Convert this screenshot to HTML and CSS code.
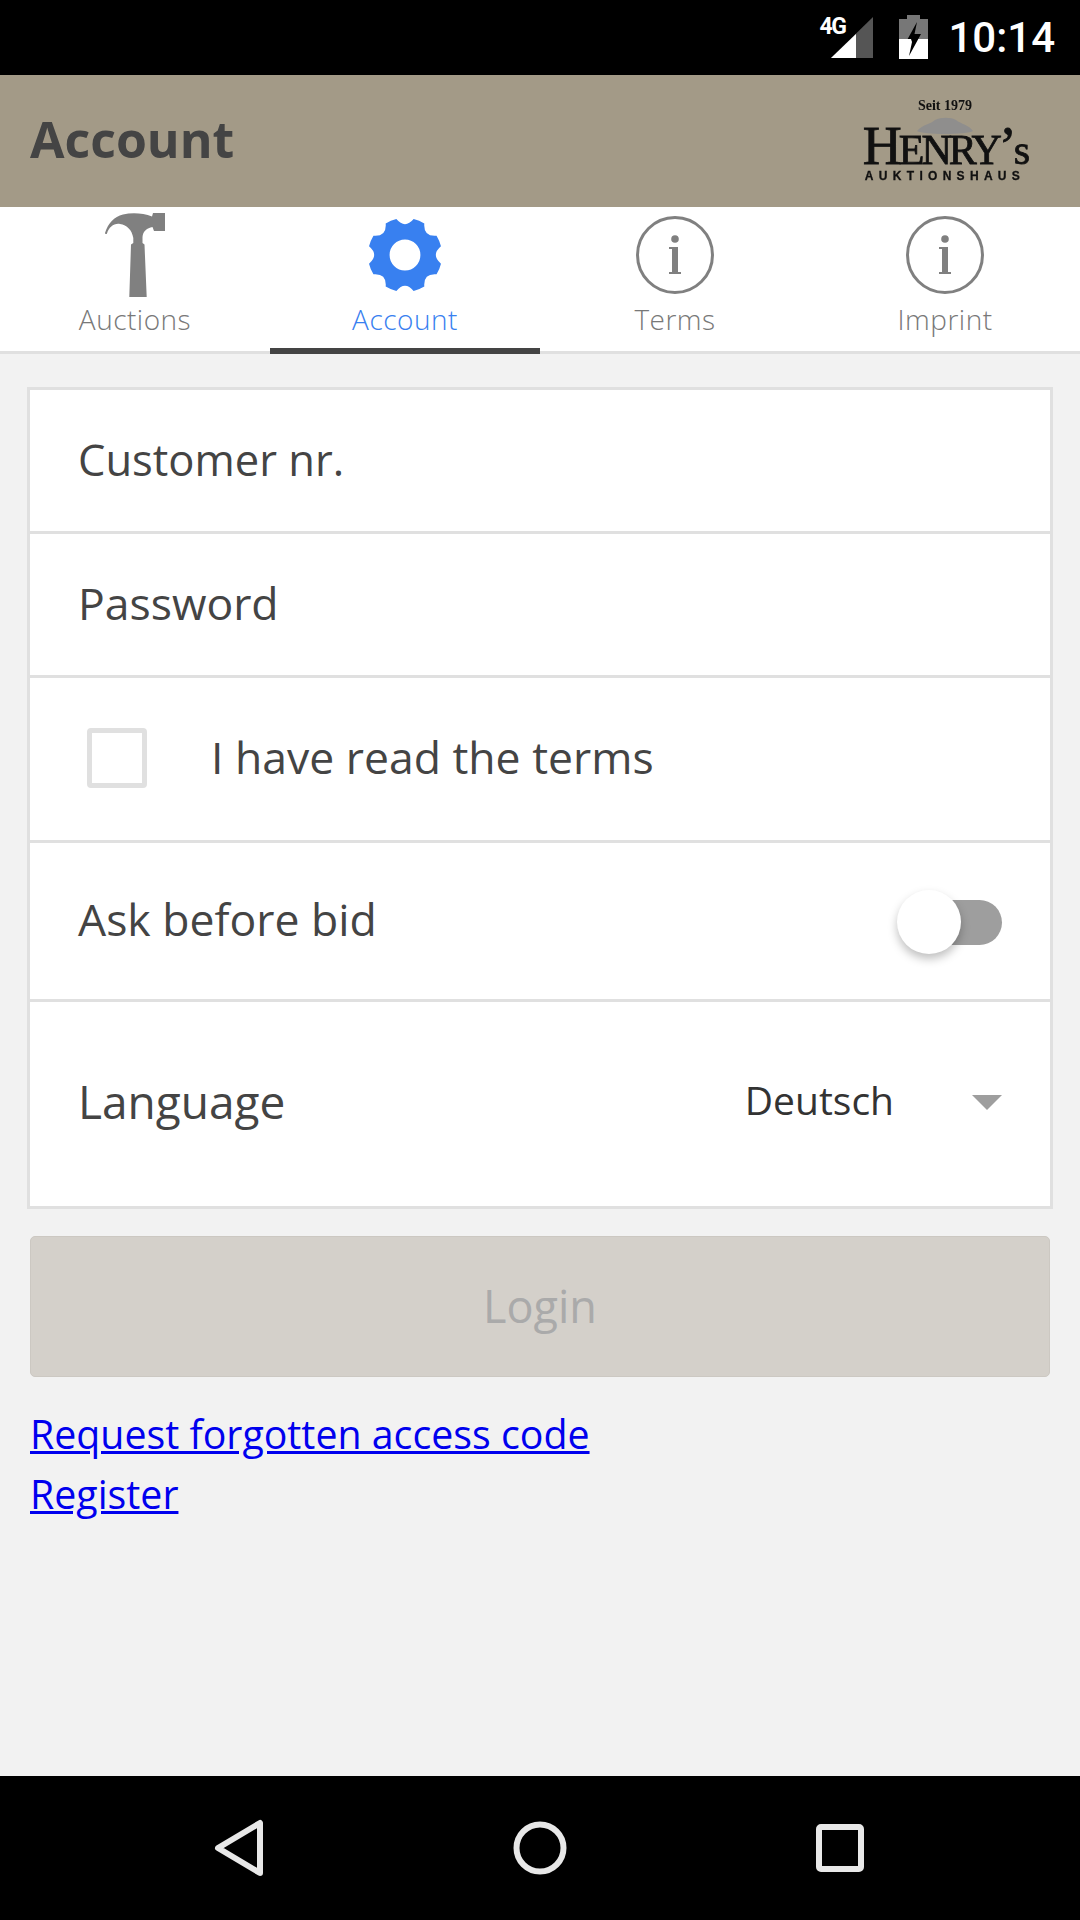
FILE: index.html
```html
<!DOCTYPE html>
<html lang="en">
<head>
<meta charset="utf-8">
<title>Account</title>
<link rel="stylesheet" href="styles.css">
</head>
<body>
<div class="phone">
  <div class="statusbar">
    <div class="signal">
      <span class="net">4G</span>
      <svg width="42" height="41" viewBox="0 0 42 41"><path d="M42 0V41H0Z" fill="#555"/><path d="M25 17V41H0L25 17Z" fill="#fff"/></svg>
    </div>
    <svg class="battery" width="29" height="44" viewBox="0 0 29 44"><path d="M8 0H21V4H29V24H0V4H8Z" fill="#777"/><path d="M0 24H29V44H0Z" fill="#fff"/><path d="M18 7L7 27H13L10 41L22 19H15.500L18 7Z" fill="#000"/><path d="M0 24H12L13 27H0Z" fill="#fff"/></svg>
    <span class="clock">10:14</span>
  </div>
  <header class="appbar">
    <h1 class="title">Account</h1>
    <div class="logo">
      <span class="logo-since">Seit 1979</span>
      <svg class="logo-roof" width="56" height="18" viewBox="0 0 56 18"><path d="M0 14C6 7 14 7 18 3C24 0 34 0 39 3C44 7 52 8 56 14C50 18 6 18 0 14Z" fill="#8f8e8d"/></svg>
      <span class="logo-name">H<small>ENRY</small>’<small>s</small></span>
      <span class="logo-sub">AUKTIONSHAUS</span>
    </div>
  </header>
  <nav class="tabs">
    <a class="tab">
      <svg class="tab-icon" width="60" height="84" viewBox="0 0 60 84"><path fill="#808080" d="M0 20C3 10 9 4 18 1.500C27 -0.500 38 0 47 3.500L48 0H60V18H49L47.500 14C42 15 38 18 37.500 24V30L39.500 31.500L41.700 84H24.300L26 31.500L28.300 30V25C27 17 22 12 15 11C9 10 4 14 2 20.500C1.500 21.500 0 21 0 20Z"/></svg>
      <span class="tab-label">Auctions</span>
    </a>
    <a class="tab tab-active">
      <svg class="tab-icon" width="74" height="74" viewBox="-36 -36 72 72"><path fill="#3880f0" fill-rule="evenodd" d="M8.400 -35A36 36 0 0 1 18.800 -30.700Q17.700 -17.700 30.700 -18.800A36 36 0 0 1 35 -8.400Q25 0 35 8.400A36 36 0 0 1 30.700 18.800Q17.700 17.700 18.800 30.700A36 36 0 0 1 8.400 35Q0 25 -8.400 35A36 36 0 0 1 -18.800 30.700Q-17.700 17.700 -30.700 18.800A36 36 0 0 1 -35 8.400Q-25 0 -35 -8.400A36 36 0 0 1 -30.700 -18.800Q-17.700 -17.700 -18.800 -30.700A36 36 0 0 1 -8.400 -35Q0 -25 8.400 -35ZM0 -15A15 15 0 1 0 0 15A15 15 0 1 0 0 -15Z"/></svg>
      <span class="tab-label">Account</span>
    </a>
    <a class="tab">
      <svg class="tab-icon" width="78" height="78" viewBox="0 0 78 78"><circle cx="39" cy="39" r="37.500" fill="none" stroke="#808080" stroke-width="3"/><circle cx="39" cy="23" r="3.800" fill="#808080"/><path fill="#808080" d="M33 31H42V56H45V58H33V56H36V33H33Z"/></svg>
      <span class="tab-label">Terms</span>
    </a>
    <a class="tab">
      <svg class="tab-icon" width="78" height="78" viewBox="0 0 78 78"><circle cx="39" cy="39" r="37.500" fill="none" stroke="#808080" stroke-width="3"/><circle cx="39" cy="23" r="3.800" fill="#808080"/><path fill="#808080" d="M33 31H42V56H45V58H33V56H36V33H33Z"/></svg>
      <span class="tab-label">Imprint</span>
    </a>
  </nav>
  <main class="content">
    <section class="card">
      <div class="row row-input row-customer">Customer nr.</div>
      <div class="row row-input">Password</div>
      <div class="row row-check"><span class="checkbox"></span><span class="check-label">I have read the terms</span></div>
      <div class="row row-toggle"><span>Ask before bid</span><span class="toggle"><span class="knob"></span></span></div>
      <div class="row row-select"><span class="select-label">Language</span><span class="select"><span class="select-value">Deutsch</span><span class="caret"></span></span></div>
    </section>
    <button class="login">Login</button>
    <div class="links">
      <a class="link">Request forgotten access code</a>
      <a class="link">Register</a>
    </div>
  </main>
  <div class="navbar">
    <svg width="50" height="58" viewBox="0 0 50 58"><path d="M46 4V54L4 29Z" fill="none" stroke="#e8e8e8" stroke-width="6" stroke-linejoin="round"/></svg>
    <svg width="54" height="54" viewBox="0 0 54 54"><circle cx="27" cy="27" r="23.500" fill="none" stroke="#e8e8e8" stroke-width="6"/></svg>
    <svg width="48" height="48" viewBox="0 0 48 48"><rect x="3" y="3" width="42" height="42" rx="2" fill="none" stroke="#e8e8e8" stroke-width="6"/></svg>
  </div>
</div>
</body>
</html>
```
FILE: styles.css
```css
* { box-sizing: border-box; }
html, body { margin: 0; padding: 0; }
body { width: 1080px; height: 1920px; font-family: "Open Sans", "Noto Sans", sans-serif; color: #444; overflow: hidden; }
.phone { width: 1080px; height: 1920px; display: flex; flex-direction: column; background: #f2f2f2; }

.statusbar { height: 75px; background: #000; display: flex; align-items: flex-start; justify-content: flex-end; padding-right: 25px; flex: none; }
.signal { width: 52px; height: 58px; margin-top: 17px; position: relative; display: flex; justify-content: flex-end; }
.net { position: absolute; left: -2px; top: 0; font: 700 23px/20px Roboto, sans-serif; letter-spacing: -1.5px; color: #fff; }
.battery { margin: 15px 0 0 26px; }
.clock { font: 500 42px/75px Roboto, sans-serif; color: #fff; margin-left: 20px; }

.appbar { height: 132px; flex: none; background: #a39a87; display: flex; align-items: center; justify-content: space-between; padding: 0 52px 4px 30px; }
.title { margin: 0; font-size: 50px; font-weight: 700; color: #444; }
.logo { width: 166px; display: flex; flex-direction: column; align-items: center; color: #111; font-family: "Liberation Serif", serif; line-height: 1; margin-top: 2px; filter: blur(0.4px); }
.logo-since { font-size: 14px; font-weight: 700; height: 16px; }
.logo-roof { margin-top: 2px; margin-bottom: -10px; }
.logo-name { font-size: 54px; font-weight: 400; height: 42px; line-height: 42px; letter-spacing: -3px; white-space: nowrap; -webkit-text-stroke: 0.8px #111; }
.logo-name small { font-size: 42px; }
.logo-sub { font-family: "Liberation Sans", sans-serif; font-size: 12px; font-weight: 700; letter-spacing: 5.300px; white-space: nowrap; margin-top: 3px; -webkit-text-stroke: 0.3px #111; }

.tabs { height: 147px; flex: none; display: flex; background: #fff; border-bottom: 3px solid #e0e0e0; }
.tab { width: 270px; height: 147px; display: flex; flex-direction: column; align-items: center; color: #787878; position: relative; padding-top: 6px; }
.tab-icon { height: 84px; flex: none; }
.tab-label { font-size: 28px; font-weight: 300; letter-spacing: 0.500px; line-height: 38px; margin-top: 3px; }
.tab-active { color: #3880f0; border-bottom: 6px solid #444; }

.content { flex: 1; padding: 33px 27px 0; }
.card { background: #fff; border: 3px solid #e0e0e0; }
.row { display: flex; align-items: center; font-size: 44.500px; color: #444; padding: 0 48px 3px; border-bottom: 3px solid #e0e0e0; }
.row:last-child { border-bottom: 0; }
.row-input { height: 144px; padding-bottom: 4px; }
.row-customer { font-size: 43.500px; padding-bottom: 3px; }
.row-check { height: 165px; padding-left: 57px; padding-bottom: 3px; }
.check-label { margin-bottom: 2px; }
.row-toggle { height: 159px; justify-content: space-between; padding-bottom: 5px; }
.row-select { height: 204px; justify-content: space-between; padding-bottom: 6px; }
.select-label { font-size: 46px; }
.checkbox { width: 60px; height: 60px; border: 5px solid #e0e0e0; border-radius: 4px; margin: 0 64px 0 0; flex: none; }
.toggle { width: 90px; height: 45px; background: #9e9e9e; border-radius: 23px; position: relative; margin-top: 8px; }
.knob { position: absolute; left: -15px; top: -10px; width: 64px; height: 64px; border-radius: 50%; background: #fff; box-shadow: 0 5px 10px rgba(0,0,0,.25); }
.select { display: flex; align-items: center; }
.select-value { font-size: 39px; color: #333; margin: 0 78px 3px 0; }
.caret { width: 0; height: 0; border-left: 15px solid transparent; border-right: 15px solid transparent; border-top: 15px solid #9e9e9e; margin-top: 2px; }

.login { display: block; width: 1020px; height: 141px; margin: 27px 3px 0; padding: 0 0 2px; background: #d4d0ca; border: 1px solid #ccc8c2; border-radius: 5px; font-family: inherit; font-size: 45px; color: #aaa; }
.links { margin: 27px 3px 0; display: flex; flex-direction: column; }
.link { font-size: 39.300px; line-height: 60px; color: #0000ee; text-decoration: underline; }

.navbar { height: 144px; flex: none; background: #000; display: flex; align-items: center; justify-content: space-between; padding: 0 216px 0 214px; }
```
